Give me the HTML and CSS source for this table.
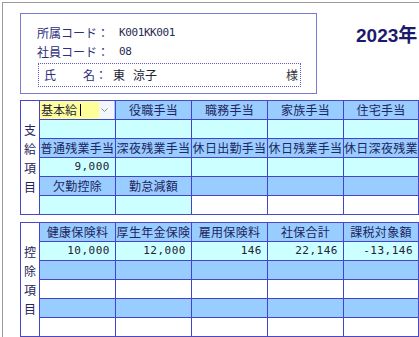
FILE: index.html
```html
<!DOCTYPE html>
<html lang="ja">
<head>
<meta charset="utf-8">
<title>給与明細</title>
<link rel="stylesheet" href="styles.css">
</head>
<body>
<div class="frame">
  <header class="top">
    <div class="idbox">
      <div class="idrow"><span class="lbl">所属コード</span><span class="colon">：</span><span class="val">K001KK001</span></div>
      <div class="idrow"><span class="lbl">社員コード</span><span class="colon">：</span><span class="val">08</span></div>
      <div class="namebox">
        <span class="nlbl"><span>氏</span><span>名</span></span><span class="colon">：</span><span class="name">東</span><span class="name given">涼子</span><span class="sama">様</span>
      </div>
    </div>
    <div class="year">2023年</div>
  </header>

  <div class="grid pay">
    <div class="side"><span>支</span><span>給</span><span>項</span><span>目</span></div>
    <div class="h sel"><span class="selval">基本給<i class="caret"></i></span><span class="selbtn"><svg width="7" height="4" viewBox="0 0 7 4"><path d="M0.5 0.5 L3.5 3.5 L6.5 0.5" stroke="#8c8c8c" stroke-width="1" fill="none"/></svg></span></div>
    <div class="h">役職手当</div>
    <div class="h">職務手当</div>
    <div class="h">家族手当</div>
    <div class="h">住宅手当</div>

    <div class="d"></div><div class="d"></div><div class="d"></div><div class="d"></div><div class="d"></div>

    <div class="h">普通残業手当</div>
    <div class="h">深夜残業手当</div>
    <div class="h">休日出勤手当</div>
    <div class="h">休日残業手当</div>
    <div class="h ovf">休日深夜残業手当</div>

    <div class="d num">9,000</div><div class="d"></div><div class="d"></div><div class="d"></div><div class="d"></div>

    <div class="h">欠勤控除</div>
    <div class="h">勤怠減額</div>
    <div class="h"></div><div class="h"></div><div class="h"></div>

    <div class="d"></div><div class="d"></div><div class="w"></div><div class="w"></div><div class="w"></div>
  </div>

  <div class="grid ded">
    <div class="side"><span>控</span><span>除</span><span>項</span><span>目</span></div>
    <div class="h">健康保険料</div>
    <div class="h">厚生年金保険</div>
    <div class="h">雇用保険料</div>
    <div class="h">社保合計</div>
    <div class="h">課税対象額</div>

    <div class="d num">10,000</div>
    <div class="d num">12,000</div>
    <div class="d num">146</div>
    <div class="d num">22,146</div>
    <div class="d num">-13,146</div>

    <div class="h"></div><div class="h"></div><div class="h"></div><div class="h"></div><div class="h"></div>
    <div class="w"></div><div class="w"></div><div class="w"></div><div class="w"></div><div class="w"></div>
    <div class="h"></div><div class="h"></div><div class="h"></div><div class="h"></div><div class="h"></div>
    <div class="w"></div><div class="w"></div><div class="w"></div><div class="w"></div><div class="w"></div>
  </div>
</div>
</body>
</html>
```

FILE: styles.css
```css
html, body {
  margin: 0;
  padding: 0;
  overflow: hidden;
  background: #ffffff;
}

body {
  font-family: "Noto Sans CJK JP", "Noto Sans", sans-serif;
  font-size: 12px;
  color: #23235a;
}

.frame {
  margin: 2px;
  width: 760px;
  min-height: 420px;
  box-sizing: border-box;
  border: 1px solid #9a9a9a;
  padding: 10px 0 0 17px;
}

/* ---------- header ---------- */
.top {
  display: flex;
  align-items: flex-start;
}

.idbox {
  width: 297px;
  height: 81px;
  box-sizing: border-box;
  border: 1px solid #7a7ad2;
  padding: 9px 15px 6px 16px;
}

.idrow {
  display: flex;
  align-items: center;
  height: 19px;
  line-height: 19px;
  white-space: nowrap;
}

.lbl {
  width: 60px;
  color: #2e2e7c;
}

.colon {
  width: 12px;
  text-align: center;
  color: #2e2e7c;
}

.val {
  margin-left: 10px;
  font-family: "DejaVu Sans Mono", monospace;
  font-size: 11px;
  letter-spacing: -0.4px;
  color: #2a2a55;
}

.namebox {
  display: flex;
  align-items: center;
  margin: 2px 0 0 1px;
  height: 24px;
  box-sizing: border-box;
  border: 1px dotted #5c5cc4;
  padding: 0 2px 0 5px;
  line-height: 22px;
  white-space: nowrap;
}

.nlbl {
  width: 51px;
  display: flex;
  justify-content: space-between;
  color: #2e2e7c;
}

.name {
  margin-left: 6px;
  color: #222233;
}

.name.given {
  margin-left: 8px;
}

.sama {
  margin-left: auto;
  color: #333340;
}

.year {
  margin: 12px 0 0 39px;
  font-family: "Liberation Sans", "Noto Sans CJK JP", sans-serif;
  font-weight: bold;
  font-size: 19px;
  line-height: 22px;
  color: #1b1b6b;
  white-space: nowrap;
}

/* ---------- grids ---------- */
.grid {
  display: grid;
  grid-template-columns: 18px 75px 75px 75px 75px 74px;
  grid-auto-rows: 18px;
  gap: 1px;
  width: max-content;
  background: #4343cc;
  border: 1px solid #4848c8;
}

.pay {
  margin-top: 6px;
}

.ded {
  margin-top: 7px;
}

.side {
  grid-row: span 6;
  background: #ffffff;
  display: flex;
  flex-direction: column;
  justify-content: center;
  align-items: center;
  line-height: 19px;
  color: #23235a;
}

.h, .d, .w {
  line-height: 18px;
  white-space: nowrap;
  overflow: hidden;
}

.h {
  background: #99ccff;
  text-align: center;
  letter-spacing: 0.3px;
  color: #1e2660;
}

.h.ovf {
  text-align: left;
}

.d {
  background: #ccffff;
}

.w {
  background: #ffffff;
}

.num {
  font-family: "DejaVu Sans Mono", monospace;
  font-size: 11px;
  letter-spacing: 0.5px;
  text-align: right;
  padding-right: 5px;
  color: #222230;
}

/* select box */
.sel {
  display: flex;
  text-align: left;
  letter-spacing: 0;
}

.selval {
  width: 59px;
  box-sizing: border-box;
  padding-left: 1px;
  background: #ffff99;
  display: flex;
  align-items: center;
  color: #1e1e40;
}

.caret {
  display: inline-block;
  width: 1px;
  height: 12px;
  margin-left: 3px;
  background: #000000;
}

.selbtn {
  width: 15px;
  background: #f3f6fb;
  display: flex;
  align-items: center;
  padding-left: 2px;
  box-sizing: border-box;
}

.selbtn svg {
  display: block;
}
```
